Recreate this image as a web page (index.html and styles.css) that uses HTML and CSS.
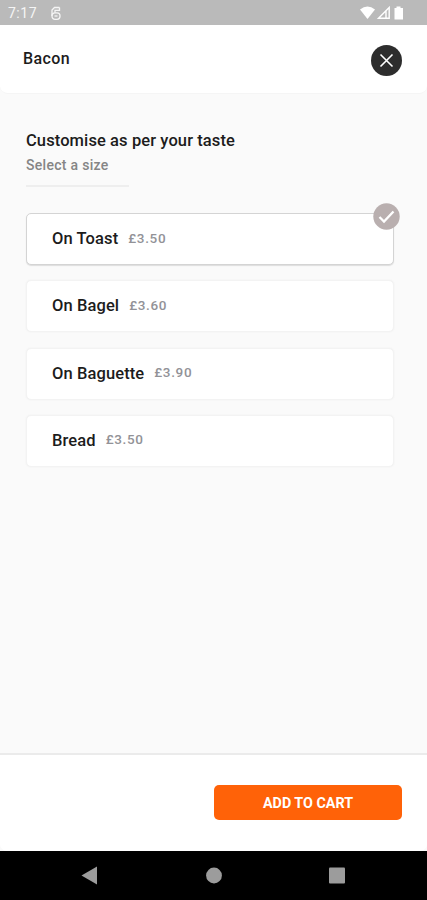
FILE: index.html
```html
<!DOCTYPE html>
<html lang="en">
<head>
<meta charset="utf-8">
<title>Bacon</title>
<link rel="stylesheet" href="styles.css">
</head>
<body>
<div class="screen">
  <div class="status">
    <span class="time">7:17</span>
    <svg class="app-icon" width="12" height="15" viewBox="0 0 12 15" fill="none" stroke="currentColor" stroke-width="1.300"><path d="M9.500 1.500H4.500L2 4v6M9.500 1.500v2.800H5v2.500"/><rect x="2" y="6.800" width="8" height="6.500" rx="3"/><path d="M4.500 10h3"/></svg>
    <svg class="signals" width="48" height="14" viewBox="0 0 48 14"><path d="M0 3.500Q7.500-2.500 15 3.500L7.500 13Z" fill="currentColor"/><path d="M18.500 12.300L29.200 1.500V12.300ZM26 5v7" fill="none" stroke="currentColor" stroke-width="1.400"/><path d="M36.500 2V.500h4V2H43v11.500h-8.500V2Z" fill="currentColor"/></svg>
  </div>
  <header class="header">
    <h1 class="title">Bacon</h1>
    <button class="close" aria-label="Close"><svg width="31" height="31" viewBox="0 0 31 31"><circle cx="15.500" cy="15.500" r="15.500" fill="#2d2d2d"/><path d="M9.500 9.500l12 12M21.500 9.500l-12 12" stroke="#fff" stroke-width="1.600"/></svg></button>
  </header>
  <main class="content">
    <h2 class="heading">Customise as per your taste</h2>
    <p class="sub">Select a size</p>
    <div class="rule"></div>
    <div class="options">
      <div class="option selected"><span class="name">On Toast</span><span class="price">£3.50</span>
        <svg class="check" width="27" height="27" viewBox="0 0 27 27"><circle cx="13.500" cy="13.500" r="13.200" fill="#b9afaf"/><path d="M6.500 14l4.500 4.500L20.500 8.500" fill="none" stroke="#fff" stroke-width="2.300"/></svg>
      </div>
      <div class="option"><span class="name">On Bagel</span><span class="price">£3.60</span></div>
      <div class="option"><span class="name">On Baguette</span><span class="price">£3.90</span></div>
      <div class="option"><span class="name">Bread</span><span class="price">£3.50</span></div>
    </div>
  </main>
  <footer class="footer"><button class="add">ADD TO CART</button></footer>
  <nav class="nav">
    <svg width="427" height="49" viewBox="0 0 427 49" fill="#9c9c9c"><path d="M81.500 24.500L97 15.500v18Z"/><circle cx="214" cy="24.500" r="7.900"/><rect x="329" y="16.500" width="16" height="16" rx="1"/></svg>
  </nav>
</div>
</body>
</html>
```
FILE: styles.css
```css
* { box-sizing: border-box; }
body { margin: 0; font-family: Roboto, sans-serif; font-weight: 500; color: #1c1c1c; }
h1, h2, p { margin: 0; font-weight: 500; white-space: nowrap; }
button { border: 0; padding: 0; font-family: inherit; }
.screen { width: 427px; height: 900px; display: flex; flex-direction: column; background: #fafafa; overflow: hidden; }
.status { height: 25px; flex: none; background: #bababa; color: #f5f5f5; display: flex; align-items: center; padding: 0 19px 0 8px; }
.time { font-size: 14px; line-height: 25px; font-weight: 400; letter-spacing: .5px; width: 42px; padding-top: 2px; }
.app-icon { margin-top: 1px; }
.signals { margin-left: auto; margin-top: 1px; color: #fff; }
.header { height: 69px; flex: none; background: #fff; border-bottom: 1px solid #f5f5f5; border-radius: 0 0 8px 8px; display: flex; align-items: center; justify-content: space-between; padding: 0 25px 0 23px; }
.title { font-size: 16px; line-height: 20px; letter-spacing: .4px; }
.close { width: 31px; height: 31px; background: none; margin-top: 2px; }
.close svg { display: block; }
.content { flex: 1; padding: 36px 33px 0 26px; }
.heading { font-size: 16.5px; line-height: 22px; letter-spacing: .1px; }
.sub { font-size: 14px; line-height: 18px; margin-top: 4px; color: #858585; letter-spacing: .3px; }
.rule { width: 103px; height: 2px; background: #eee; margin-top: 11px; }
.options { display: flex; flex-direction: column; gap: 15.300px; margin-top: 26px; }
.option { position: relative; height: 52px; background: #fff; border: 1px solid #f3f3f3; border-radius: 5px; box-shadow: 0 0 2px #eee; padding-left: 25px; display: flex; align-items: center; gap: 10px; }
.option.selected { border: 1px solid #d4d4d4; box-shadow: 0 1px 1px #ddd; }
.name { font-size: 16.5px; line-height: 20px; letter-spacing: .1px; }
.price { font-size: 13.500px; line-height: 18px; letter-spacing: .65px; color: #929297; margin-top: -3px; }
.check { position: absolute; right: -7px; top: -11px; }
.footer { height: 98px; flex: none; background: #fff; border-top: 2px solid #ebebeb; border-radius: 0 0 7px 7px; display: flex; justify-content: flex-end; padding: 30px 25px 0 0; }
.add { width: 188px; height: 35px; border-radius: 5px; background: #ff6208; color: #fff; font-size: 14.300px; font-weight: 700; }
.nav { height: 49px; flex: none; background: #000; }
.nav svg { display: block; }
```
